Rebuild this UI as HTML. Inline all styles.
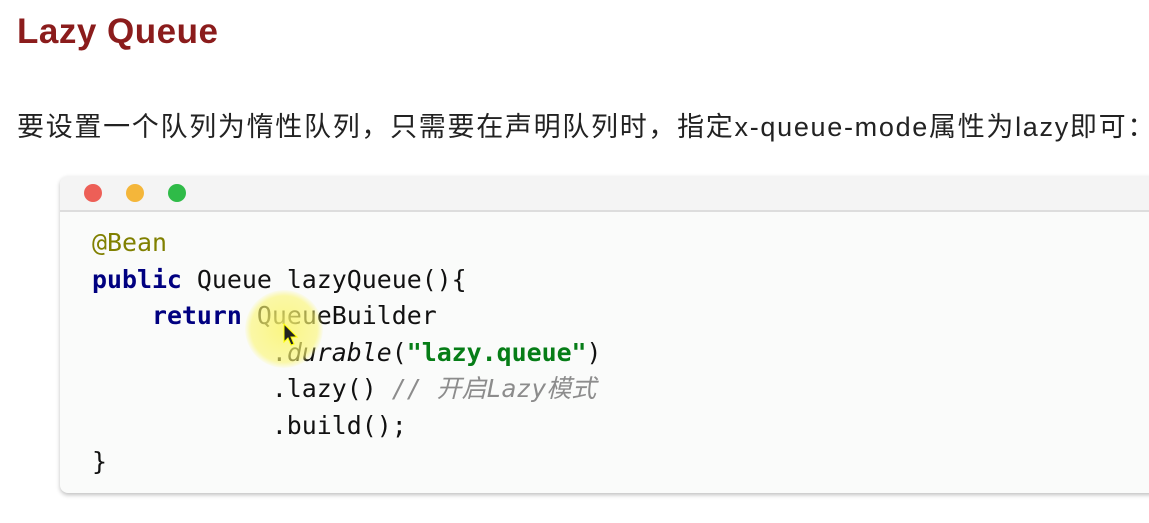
<!DOCTYPE html>
<html><head><meta charset="utf-8"><style>
body{margin:0;width:1149px;height:523px;background:#fff;overflow:hidden;position:relative;font-family:"Liberation Sans","Noto Sans CJK SC",sans-serif}
h1{position:absolute;left:17px;top:12px;margin:0;font-size:35px;font-weight:bold;color:#8b1c1c;letter-spacing:0.5px}
p{position:absolute;left:17px;top:105px;margin:0;font-size:27px;color:#222;white-space:nowrap;letter-spacing:1.7px}
.card{position:absolute;left:60px;top:176px;width:1120px;height:317px;background:#fafbfa;border-radius:8px;box-shadow:0 2px 4px rgba(0,0,0,.25)}
.hdr{height:34px;background:#f4f4f4;border-bottom:2px solid #ddd;border-radius:8px 8px 0 0;position:relative}
.dot{position:absolute;top:8px;width:18px;height:18px;border-radius:50%}
pre{position:absolute;left:32px;top:49px;margin:0;font-family:"DejaVu Sans Mono",monospace;font-size:24.9px;line-height:36.5px;color:#111}
.an{color:#808000}.kw{color:#000080;font-weight:bold}.st{color:#067d17;font-weight:bold}.it{font-style:italic}.cm{color:#8c8c8c;font-style:italic}
.hl{position:absolute;left:245px;top:290px;width:78px;height:78px;border-radius:50%;background:radial-gradient(circle,rgba(250,245,110,.85),rgba(250,245,110,.6) 60%,rgba(250,245,110,0) 72%)}
</style></head><body>
<h1>Lazy Queue</h1>
<p>要设置一个队列为惰性队列，只需要在声明队列时，指定x-queue-mode属性为lazy即可：</p>
<div class="card"><div class="hdr">
<div class="dot" style="left:24px;background:#ed5f57"></div>
<div class="dot" style="left:66px;background:#f4b63a"></div>
<div class="dot" style="left:108px;background:#2fbb48"></div></div>
<pre><span class="an">@Bean</span>
<span class="kw">public</span> Queue lazyQueue(){
    <span class="kw">return</span> QueueBuilder
            .<span class="it">durable</span>(<span class="st">"lazy.queue"</span>)
            .lazy() <span class="cm">// 开启Lazy模式</span>
            .build();
}</pre></div>
<div class="hl"></div>
<svg style="position:absolute;left:283px;top:323px" width="16" height="24"><path d="M1 1 L1 19 L5 15 L8 22 L11 21 L8 14 L14 14 Z" fill="#222" stroke="#ff0" stroke-width="1"/></svg>
</body></html>
